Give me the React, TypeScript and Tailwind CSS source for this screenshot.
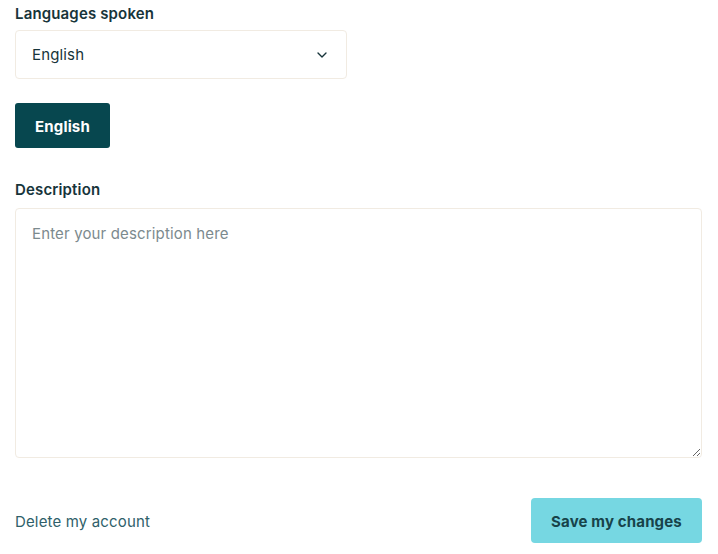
import { ChevronDown } from 'lucide-react';

export default function App() {
  return (
    <div className="min-h-[554px] bg-white pl-[15px] pr-[16px] text-[#17343a]" style={{ fontFamily: 'Inter, "Noto Sans", sans-serif' }}>
      <div className="pt-[5px]">
        <label className="block text-[15px] font-semibold leading-[18px] tracking-[0.01em] text-[#17343a]">Languages spoken</label>
        <div className="mt-[7px] flex h-[49px] w-[332px] items-center justify-between rounded-[4px] border border-[#f1ebe2] pl-[16px] pr-[16px] pt-[2px]">
          <span className="text-[15px] tracking-[0.01em] text-[#17343a]">English</span>
          <ChevronDown className="-mt-[2px] h-[16px] w-[16px] text-[#17343a]" strokeWidth={2} />
        </div>
        <button className="mt-[24px] flex h-[45px] w-[95px] items-center justify-center rounded-[3px] bg-[#07474f] pt-[3px] text-[15px] font-bold tracking-[0.01em] text-white">
          English
        </button>
      </div>

      <div className="mt-[33px]">
        <label className="block text-[15px] font-semibold leading-[18px] tracking-[0.01em] text-[#17343a]">Description</label>
        <textarea
          placeholder="Enter your description here"
          className="mt-[9px] block h-[250px] w-full resize-y rounded-[4px] border border-[#f1ebe2] px-[16px] py-[14px] text-[15px] tracking-[0.01em] text-[#17343a] outline-none placeholder:text-[#7c8a8e]"
        />
      </div>

      <div className="mt-[40px] flex items-center justify-between">
        <button className="pt-[4px] text-[15px] tracking-[0.01em] text-[#2f5f6a]">Delete my account</button>
        <button className="flex h-[45px] w-[171px] items-center justify-center rounded-[4px] bg-[#76d7e2] pt-[4px] text-[15px] font-bold tracking-[0.01em] text-[#17434a]">
          Save my changes
        </button>
      </div>
    </div>
  );
}
